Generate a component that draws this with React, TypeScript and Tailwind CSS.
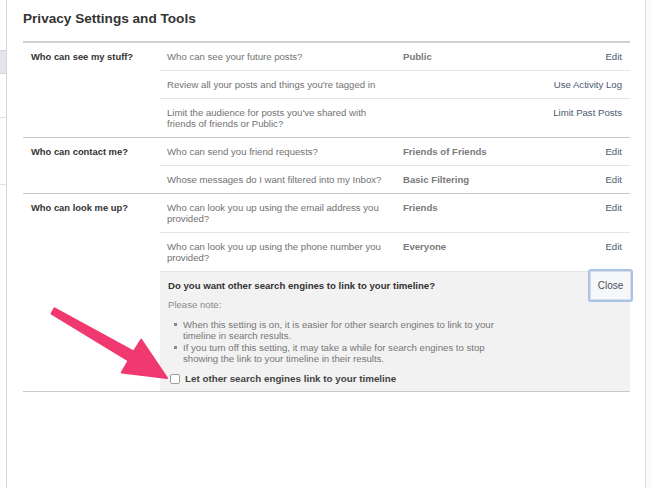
import React from "react";

type Row = {
  question: React.ReactNode;
  value?: string;
  action: string;
};

const sections: { label: string; rows: Row[] }[] = [
  {
    label: "Who can see my stuff?",
    rows: [
      { question: "Who can see your future posts?", value: "Public", action: "Edit" },
      { question: "Review all your posts and things you're tagged in", action: "Use Activity Log" },
      {
        question: (
          <>
            Limit the audience for posts you've shared with
            <br />
            friends of friends or Public?
          </>
        ),
        action: "Limit Past Posts",
      },
    ],
  },
  {
    label: "Who can contact me?",
    rows: [
      { question: "Who can send you friend requests?", value: "Friends of Friends", action: "Edit" },
      { question: "Whose messages do I want filtered into my Inbox?", value: "Basic Filtering", action: "Edit" },
    ],
  },
  {
    label: "Who can look me up?",
    rows: [
      {
        question: (
          <>
            Who can look you up using the email address you
            <br />
            provided?
          </>
        ),
        value: "Friends",
        action: "Edit",
      },
      {
        question: (
          <>
            Who can look you up using the phone number you
            <br />
            provided?
          </>
        ),
        value: "Everyone",
        action: "Edit",
      },
    ],
  },
];

const SettingRow = ({ row, border }: { row: Row; border: boolean }) => (
  <div
    className={`flex py-2 leading-[11px] text-[9.6px] ${
      border ? "border-b border-[#e4e4e4]" : ""
    }`}
  >
    <div className="w-[243px] shrink-0 pl-[7px] text-[#727272]">{row.question}</div>
    <div className="flex-1 font-bold text-[#7a7a7a]">{row.value}</div>
    <div className="pr-2 text-right text-[#4d5a72]">{row.action}</div>
  </div>
);

const SearchEngineBox = () => (
  <div className="flex bg-[#f2f2f2] border-t border-[#e4e4e4]">
    <div className="flex-1 pl-2 pt-[8px] pb-[7px] text-[9.6px] leading-[11px]">
      <div className="font-bold text-[9.6px] text-[#333]">
        Do you want other search engines to link to your timeline?
      </div>
      <div className="mt-[8px] text-[#8a8a8a]">Please note:</div>
      <ul className="mt-[9px] flex flex-col gap-[1px] text-[#777]">
        <li className="flex">
          <span className="mt-[4px] ml-[6px] mr-[6px] h-[3px] w-[3px] shrink-0 bg-[#8a8a8a]" />
          <span>
            When this setting is on, it is easier for other search engines to link to your
            <br />
            timeline in search results.
          </span>
        </li>
        <li className="flex">
          <span className="mt-[4px] ml-[6px] mr-[6px] h-[3px] w-[3px] shrink-0 bg-[#8a8a8a]" />
          <span>
            If you turn off this setting, it may take a while for search engines to stop
            <br />
            showing the link to your timeline in their results.
          </span>
        </li>
      </ul>
      <label className="mt-[9px] flex items-center">
        <span className="ml-[2px] mr-[5px] h-[10px] w-[10px] rounded-[2px] border border-[#a0a0a0] bg-white" />
        <span className="font-bold text-[9.8px] text-[#444]">
          Let other search engines link to your timeline
        </span>
      </label>
    </div>
    <button className="-mt-[3px] -mr-[3px] h-[33px] w-[45px] rounded-[3px] border-2 border-[#a9c3e6] bg-[#f6f7f9] text-[10px] text-[#4b4f56] shadow-[inset_0_0_0_1px_#d8dde6]">
      Close
    </button>
  </div>
);

export default function App() {
  return (
    <div className="relative flex h-[488px] w-[652px] overflow-hidden bg-white font-['Liberation_Sans',Arial,sans-serif]">
      {/* sidebar remnant */}
      <div className="w-[7px] shrink-0 border-r border-[#d6d6d6]">
        <div className="h-[50px]" />
        <div className="h-[24px] border-y border-[#d6d9e2] bg-[#e2e5ee]" />
        <div className="h-[44px] border-b border-[#e2e2e2]" />
        <div className="h-[67px] border-b border-[#e2e2e2]" />
      </div>

      <div className="w-[639px] shrink-0 border-r border-[#dcdcdc] pl-4 pr-[15px]">
        <h1 className="pt-[11px] text-[13.6px] leading-[16px] font-bold text-[#333]">
          Privacy Settings and Tools
        </h1>

        <div className="mt-[14px] border-t-2 border-[#d2d2d2]">
          {sections.map((section, si) => (
            <div key={si} className="flex border-b border-[#c9c9c9]">
              <div className="w-[137px] shrink-0 py-2 pl-2 text-[9.4px] leading-[11px] font-bold text-[#333]">
                {section.label}
              </div>
              <div className="flex-1">
                {section.rows.map((row, ri) => (
                  <SettingRow
                    key={ri}
                    row={row}
                    border={ri < section.rows.length - 1}
                  />
                ))}
                {si === 2 && <SearchEngineBox />}
              </div>
            </div>
          ))}
        </div>
      </div>

      <div className="flex-1 bg-[#fbfbfb]" />

      {/* pink pointer arrow */}
      <svg
        className="pointer-events-none absolute left-0 top-0"
        width="652"
        height="488"
        viewBox="0 0 652 488"
      >
        <polygon
          points="54.5,308.3 133.8,351.6 141.2,339.7 167,378 121.7,372.6 128.7,360.6 51.5,313.7"
          fill="#f0396f"
          stroke="#f0396f"
          strokeWidth="2"
          strokeLinejoin="round"
        />
      </svg>
    </div>
  );
}
